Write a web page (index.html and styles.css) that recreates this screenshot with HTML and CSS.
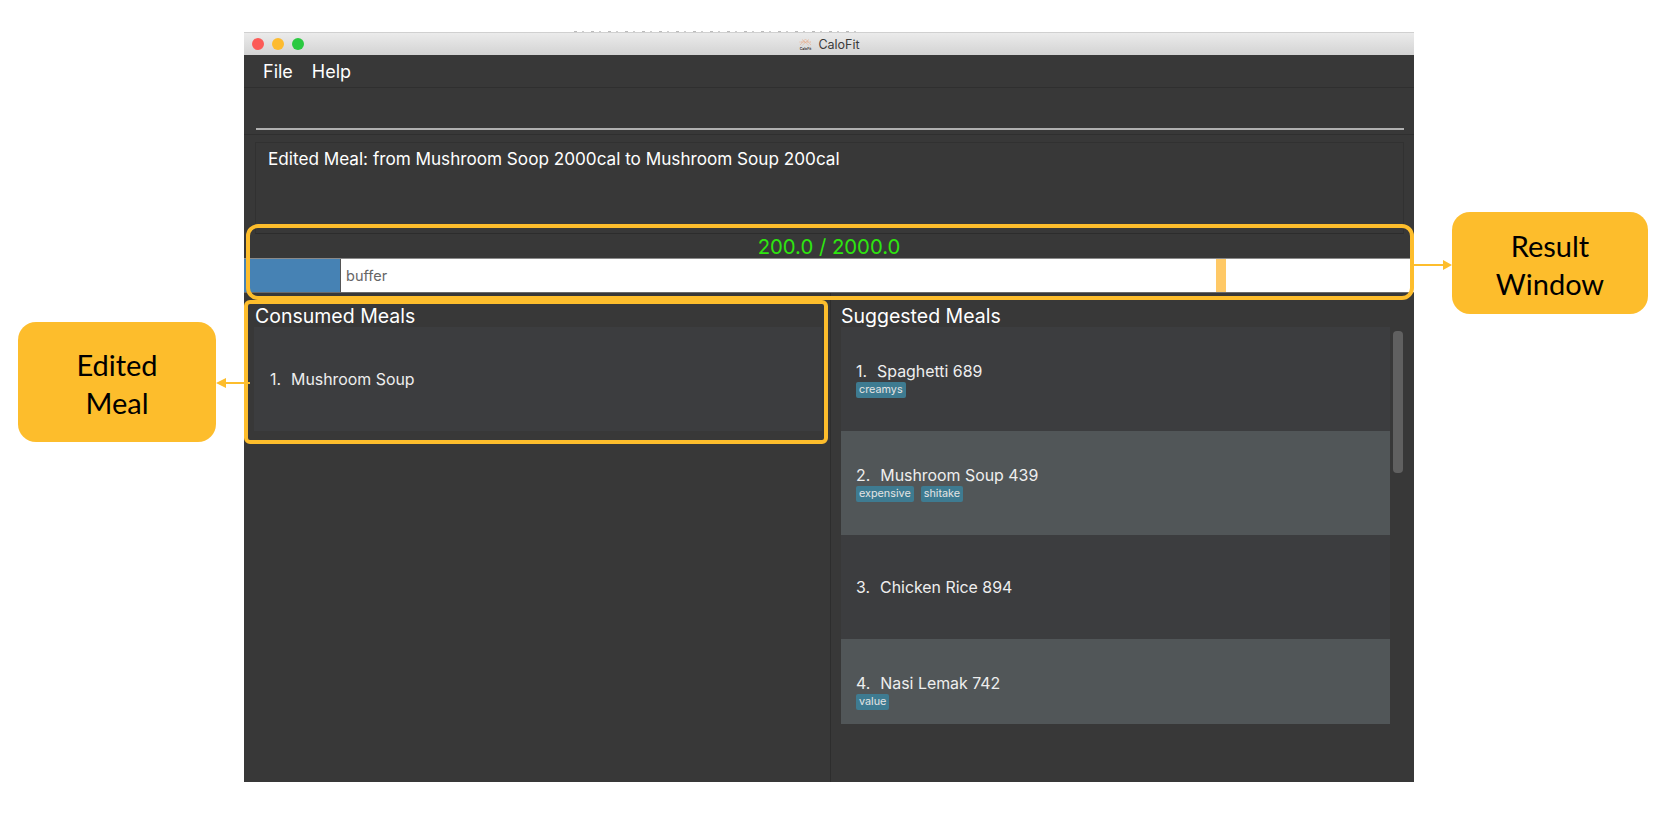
FILE: index.html
```html
<!DOCTYPE html>
<html lang="en">
<head>
  <meta charset="UTF-8" />
  <title>CaloFit</title>
  <link rel="stylesheet" href="styles.css">
</head>
<body>
  <div class="page">
    <div class="scrap"></div>
    <div class="window">
      <div class="titlebar">
        <div class="lights">
          <span class="light red"></span>
          <span class="light yellow"></span>
          <span class="light green"></span>
        </div>
        <div class="title">
          <svg class="logo" width="15" height="12" viewBox="0 0 15 12">
            <g stroke="#e8a27a" stroke-width="0.7" fill="none" stroke-dasharray="1 0.5">
              <path d="M2 7 L7.5 1 L13 7" />
              <path d="M4 1.5 L11 7.5" />
              <path d="M11 1.5 L4 7.5" />
              <path d="M1.5 4 L13.5 4" />
            </g>
            <text x="7.5" y="11.5" text-anchor="middle" class="logo-text">CaloFit</text>
          </svg>
          <span>CaloFit</span>
        </div>
      </div>

      <div class="menubar">
        <span>File</span>
        <span>Help</span>
      </div>

      <div class="command">
        <div class="command-line"></div>
      </div>

      <div class="result-wrap">
        <div class="result">Edited Meal: from Mushroom Soop 2000cal to Mushroom Soup 200cal</div>
      </div>

      <div class="calories">200.0 / 2000.0</div>
      <div class="bar">
        <div class="bar-fill"></div>
        <div class="bar-track">
          <span class="bar-label">buffer</span>
          <span class="bar-mark"></span>
        </div>
      </div>

      <div class="columns">
        <div class="col col-left">
          <div class="col-title">Consumed Meals</div>
          <div class="list list-short">
            <div class="row">
              <div class="row-name"><span class="num">1.</span>Mushroom Soup</div>
            </div>
          </div>
        </div>
        <div class="col col-right">
          <div class="col-title">Suggested Meals</div>
          <div class="list-wrap">
            <div class="list">
              <div class="row">
                <div class="row-name"><span class="num">1.</span>Spaghetti 689</div>
                <div class="tags"><span class="tag">creamys</span></div>
              </div>
              <div class="row alt">
                <div class="row-name"><span class="num">2.</span>Mushroom Soup 439</div>
                <div class="tags"><span class="tag">expensive</span><span class="tag">shitake</span></div>
              </div>
              <div class="row">
                <div class="row-name"><span class="num">3.</span>Chicken Rice 894</div>
              </div>
              <div class="row alt">
                <div class="row-name"><span class="num">4.</span>Nasi Lemak 742</div>
                <div class="tags"><span class="tag">value</span></div>
              </div>
            </div>
            <div class="scrollbar"></div>
          </div>
        </div>
      </div>
    </div>

    <!-- annotations on top of the screenshot -->
    <div class="frame frame-result"></div>
    <div class="frame frame-meal"></div>

    <svg class="arrow arrow-right" width="40" height="12" viewBox="0 0 40 12">
      <path d="M0 6 H30" stroke="#fdbd2c" stroke-width="2" />
      <path d="M29 1 L38 6 L29 11 Z" fill="#fdbd2c" />
    </svg>
    <svg class="arrow arrow-left" width="34" height="12" viewBox="0 0 34 12">
      <path d="M34 6 H8" stroke="#fdbd2c" stroke-width="2" />
      <path d="M10 1 L0 6 L10 11 Z" fill="#fdbd2c" />
    </svg>

    <div class="callout callout-result">Result<br>Window</div>
    <div class="callout callout-meal">Edited<br>Meal</div>
  </div>
</body>
</html>
```

FILE: styles.css
```css
html, body {
  margin: 0;
  padding: 0;
  background-color: white;
}
.page {
  position: relative;
  width: 1662px;
  height: 828px;
  overflow: hidden;
  padding: 32px 0 0 244px;
  box-sizing: border-box;
  font-family: Inter, sans-serif;
}
.scrap {
  position: absolute;
  left: 574px;
  top: 31px;
  width: 286px;
  height: 1px;
  background: repeating-linear-gradient(90deg, #bbb 0 3px, transparent 3px 8px, #ccc 8px 10px, transparent 10px 17px);
}
.window {
  position: relative;
  width: 1170px;
  height: 750px;
  display: flex;
  flex-direction: column;
  background-color: #383838;
  color: white;
}

/* title bar */
.titlebar {
  position: relative;
  height: 23px;
  flex-shrink: 0;
  display: flex;
  align-items: center;
  justify-content: center;
  background: linear-gradient(#ebebeb, #d3d3d3);
  border-top: 1px solid #d0d0d0;
  box-sizing: border-box;
}
.lights {
  position: absolute;
  left: 8px;
  top: 5px;
  display: flex;
  gap: 8px;
}
.light {
  width: 12px;
  height: 12px;
  border-radius: 50%;
}
.red { background-color: #fc5b57; }
.yellow { background-color: #fdbb2f; }
.green { background-color: #2ac940; }
.title {
  display: flex;
  align-items: center;
  gap: 5px;
  color: #3a3a3a;
  font-size: 12.5px;
}
.logo-text {
  font-size: 3.4px;
  font-weight: 700;
  fill: #444;
}

/* menu and command box */
.menubar {
  height: 33px;
  flex-shrink: 0;
  display: flex;
  align-items: center;
  gap: 19px;
  padding-left: 19px;
  font-size: 18px;
  border-bottom: 1px solid #2f2f2f;
  box-sizing: border-box;
}
.command {
  height: 47px;
  flex-shrink: 0;
  padding: 40px 10px 0 12px;
  border-bottom: 1px solid #2f2f2f;
  box-sizing: border-box;
}
.command-line {
  height: 2px;
  background-color: #b0b0b0;
}
.result-wrap {
  height: 99px;
  flex-shrink: 0;
  padding: 7px 10px 0 11px;
  box-sizing: border-box;
}
.result {
  height: 92px;
  padding: 6px 12px;
  font-size: 17.15px;
  line-height: 20px;
  border: 1px solid #313131;
  border-bottom-color: #2c2c2c;
  box-sizing: border-box;
}

/* calorie bar */
.calories {
  height: 24px;
  flex-shrink: 0;
  padding-top: 1px;
  text-align: center;
  color: #2ee60f;
  font-size: 20.3px;
  line-height: 24px;
  box-sizing: border-box;
}
.bar {
  height: 35px;
  flex-shrink: 0;
  display: flex;
  border-top: 1px solid #8a8a8a;
  border-bottom: 1px solid #6a6a6a;
  box-sizing: border-box;
}
.bar-fill {
  width: 96px;
  flex-shrink: 0;
  background-color: #4682b4;
  border-right: 1px solid #555;
}
.bar-track {
  position: relative;
  flex: 1;
  display: flex;
  align-items: center;
  padding-left: 5px;
  background-color: white;
}
.bar-label {
  color: #666;
  font-size: 14.5px;
}
.bar-mark {
  position: absolute;
  left: 875px;
  top: 0;
  bottom: 0;
  width: 10px;
  background-color: #ffc966;
}

/* meal columns */
.columns {
  flex: 1;
  display: flex;
  min-height: 0;
}
.col {
  display: flex;
  flex-direction: column;
  box-sizing: border-box;
}
.col-left {
  width: 587px;
  padding: 7px 8px 0 10px;
  border-right: 1px solid #2d2d2d;
}
.col-right {
  flex: 1;
  padding: 7px 0 0 10px;
}
.col-title {
  height: 27px;
  flex-shrink: 0;
  padding: 5px 0 0 1px;
  font-size: 19.5px;
  line-height: 22px;
  box-sizing: border-box;
}
.col-right .col-title {
  padding-left: 0;
}
.list-wrap {
  display: flex;
  height: 397px;
}
.list {
  width: 549px;
  flex-shrink: 0;
  overflow: hidden;
}
.list-short {
  width: 568px;
}
.row {
  height: 104px;
  padding: 1px 0 0 15px;
  display: flex;
  flex-direction: column;
  justify-content: center;
  background-color: #3c3d3f;
  font-size: 15.9px;
  color: #eeeeee;
  box-sizing: border-box;
}
.list-short .row {
  padding-left: 16px;
}
.alt {
  background-color: #515658;
}
.row-name {
  line-height: 20px;
}
.num {
  margin-right: 10px;
}
.tags {
  display: flex;
  gap: 7px;
}
.tag {
  height: 16px;
  padding: 0 3px;
  line-height: 16px;
  font-size: 10.8px;
  color: #e4e4e4;
  background-color: #3e7b91;
  border-radius: 2px;
}
.scrollbar {
  width: 10px;
  height: 142px;
  margin: 4px 0 0 3px;
  background-color: #606060;
  border-radius: 4px;
}

/* annotations */
.frame {
  position: absolute;
  border: 4px solid #fdbd2c;
  box-sizing: border-box;
}
.frame-result {
  left: 246px;
  top: 224px;
  width: 1168px;
  height: 76px;
  border-radius: 12px;
}
.frame-meal {
  left: 244px;
  top: 300px;
  width: 584px;
  height: 144px;
  border-radius: 6px;
}
.arrow {
  position: absolute;
}
.arrow-right {
  left: 1414px;
  top: 259px;
}
.arrow-left {
  left: 216px;
  top: 377px;
}
.callout {
  position: absolute;
  display: flex;
  align-items: center;
  justify-content: center;
  padding-top: 4px;
  text-align: center;
  background-color: #fdbd2c;
  color: black;
  font-family: Lato, sans-serif;
  font-size: 29px;
  line-height: 38px;
  border-radius: 18px;
  box-sizing: border-box;
}
.callout-result {
  left: 1452px;
  top: 212px;
  width: 196px;
  height: 102px;
}
.callout-meal {
  left: 18px;
  top: 322px;
  width: 198px;
  height: 120px;
}
```
